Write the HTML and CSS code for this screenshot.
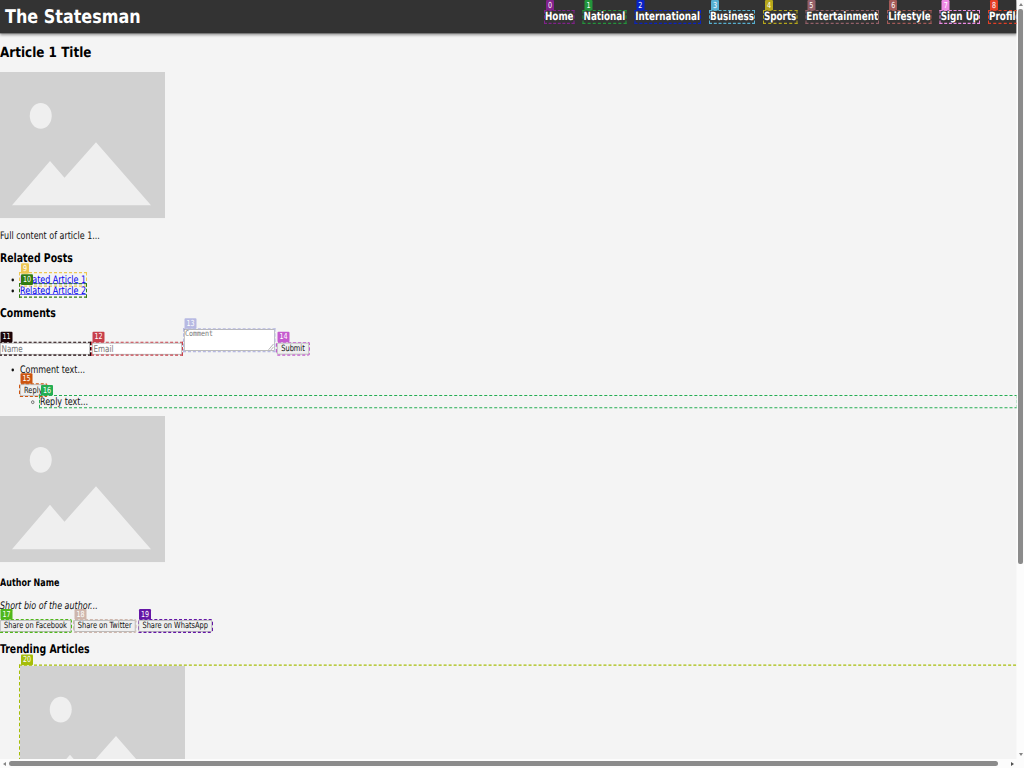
FILE: index.html
```html
<!DOCTYPE html>
<html lang="en">
<head>
<meta charset="utf-8">
<title>The Statesman</title>
<link rel="stylesheet" href="styles.css">
</head>
<body>
<svg class="defs" width="0" height="0"><symbol id="photo" viewBox="0 0 330 250" preserveAspectRatio="none"><rect width="330" height="250" fill="#d1d1d1"/><ellipse cx="81.5" cy="75" rx="22" ry="22" fill="#efefef"/><path d="M24 228L100 152L129 181L192 120L302 228Z" fill="#efefef"/></symbol></svg>
<div class="window">
<div class="page">
<header class="top">
<h1>The Statesman</h1>
<nav>
<a class="mark c0">Home<b>0</b></a><a class="mark c1">National<b>1</b></a><a class="mark c2">International<b>2</b></a><a class="mark c3">Business<b>3</b></a><a class="mark c4">Sports<b>4</b></a><a class="mark c5">Entertainment<b>5</b></a><a class="mark c6">Lifestyle<b>6</b></a><a class="mark c7">Sign Up<b>7</b></a><a class="mark c8">Profile<b>8</b></a>
</nav>
</header>
<main>
<h2>Article 1 Title</h2>
<svg class="photo"><use href="#photo"/></svg>
<p class="content">Full content of article 1...</p>
<h3 class="related">Related Posts</h3>
<ul class="links">
<li><a class="mark c9">Related Article 1<b>9</b></a></li>
<li><a class="mark c10">Related Article 2<b>10</b></a></li>
</ul>
<h3 class="comments">Comments</h3>
<div class="form">
<div class="mark field c11">Name<b>11</b></div>
<div class="mark field c12">Email<b>12</b></div>
<div class="mark area c13">Comment<svg width="12" height="12" viewBox="0 0 12 12"><path d="M1 11L11 1M6 11L11 6" stroke="#777" fill="none"/></svg><b>13</b></div>
<div class="mark button submit c14">Submit<b>14</b></div>
</div>
<ul class="thread">
<li>Comment text...
<div class="reply-row"><div class="mark button reply c15">Reply<b>15</b></div></div>
<ul><li class="mark c16">Reply text...<b>16</b></li></ul>
</li>
</ul>
<svg class="photo author-photo"><use href="#photo"/></svg>
<h4>Author Name</h4>
<p class="bio">Short bio of the author...</p>
<div class="share">
<div class="mark button fb c17">Share on Facebook<b>17</b></div>
<div class="mark button tw c18">Share on Twitter<b>18</b></div>
<div class="mark button wa c19">Share on WhatsApp<b>19</b></div>
</div>
<h3 class="trending">Trending Articles</h3>
<div class="mark trend c20"><svg class="photo"><use href="#photo"/></svg><b>20</b></div>
</main>
</div>
<div class="vbar"><i class="up"></i><span></span><i class="down"></i></div>
<div class="hbar"><i class="left"></i><span></span><i class="right"></i></div>
</div>
</body>
</html>
```

FILE: styles.css
```css
* { box-sizing: border-box; }
html, body { margin: 0; height: 768px; overflow: hidden; }
.defs { position: absolute; }
.window {
  display: grid;
  grid-template: 759px 9px / 1017px 7px;
  width: 1024px;
  height: 768px;
  overflow: hidden;
  background: #fcfcfc;
}
.page {
  width: 2033px;
  height: 1298px;
  overflow: hidden;
  transform: scale(.5, .585);
  transform-origin: 0 0;
  background: #f4f4f4;
  color: #111;
  font: 17.78px/19px "DejaVu Sans Condensed", "DejaVu Sans", sans-serif;
  text-rendering: geometricPrecision;
}
h1, h2, h3, h4, p, ul { margin: 0; }
h1, h2, h3, h4 { color: #000; }
.top {
  display: flex;
  align-items: center;
  height: 57px;
  padding-left: 10px;
  background: #333;
  box-shadow: 0 2px 5px rgba(0,0,0,.4);
}
h1 { width: 1080px; flex: none; color: #fff; font-family: "DejaVu Sans", sans-serif; font-size: 32px; line-height: 37px; }
nav { display: flex; gap: 20px; flex: none; font-weight: bold; font-size: 19.56px; line-height: 20px; color: #fff; }
.mark { position: relative; outline: 2.4px dashed var(--c); outline-offset: 0; }
.mark > b {
  position: absolute;
  left: 2px;
  top: -19px;
  padding: 0 4px;
  border-radius: 2px;
  background: var(--c);
  color: #fff;
  font: 14.2px/18px "DejaVu Sans Condensed", "DejaVu Sans", sans-serif;
}
.c0 { --c: #81218b; } .c1 { --c: #23953b; } .c2 { --c: #0822c5; }
.c3 { --c: #57b0d1; } .c4 { --c: #b5a61b; } .c5 { --c: #946069; }
.c6 { --c: #a45a58; } .c7 { --c: #ee8be5; } .c8 { --c: #e43e25; }
.c9 { --c: #edc752; } .c10 { --c: #317c10; } .c11 { --c: #1c0407; }
.c12 { --c: #c8404b; } .c13 { --c: #b7b9e2; } .c14 { --c: #c55bcf; }
.c15 { --c: #cc5510; } .c16 { --c: #24ae52; } .c17 { --c: #50b71b; }
.c18 { --c: #ceb6ac; } .c19 { --c: #6516a6; } .c20 { --c: #a5bd08; }
.links .mark > b { top: -17px; }
h2 { height: 66px; padding-top: 18px; font-family: "DejaVu Sans", sans-serif; font-size: 24px; line-height: 28px; }
.photo { display: block; width: 330px; height: 250px; }
.content { padding-top: 20px; height: 57px; }
h3 { font-size: 20.8px; line-height: 22px; }
.related { height: 38px; }
.links, .thread { padding-left: 40px; }
.links { height: 56px; }
.links a { color: #0000ee; text-decoration: underline; }
.links a b { display: inline-block; }
.comments { height: 40px; }
.form { display: flex; align-items: flex-start; gap: 4px; height: 58px; }
.field, .area { background: #fff; border: 1.5px solid #8b8b8b; color: #757575; }
.field { width: 180px; height: 20px; margin-top: 22px; padding-left: 2px; font-size: 16px; line-height: 17px; }
.area { width: 181px; height: 37px; margin-top: -1px; padding: 0 1px; font: 13.3px/15px "DejaVu Sans Mono", monospace; }
.field > b, .area > b, .button > b { left: 0; top: -20px; }
.area svg { position: absolute; right: 0; bottom: 0; }
.field, .area, .button { outline-offset: -.5px; }
.button { width: max-content; height: 20px; border: 1.5px solid #8b8b8b; border-radius: 2px; background: #efefef; padding: 0 5px; font-size: 14.8px; line-height: 17px; text-align: center; white-space: nowrap; }
.submit { width: 64px; margin-top: 22px; margin-left: 1px; }
.thread { height: 89px; }
.reply-row { padding-top: 16px; height: 36px; }
.reply { width: 53px; }
.thread ul { padding-left: 40px; }
h4 { height: 39px; margin-top: 25px; font-size: 17.78px; }
.bio { height: 35px; padding-top: 1px; font-style: italic; }
.share { display: flex; gap: 6px; height: 38px; }
.fb { width: 142px; } .tw { width: 123px; } .wa { width: 147px; }
.trending { height: 40px; }
.trend { margin-left: 40px; width: 2200px; height: 500px; }
.vbar, .hbar { display: flex; align-items: center; justify-content: space-between; background: #fcfcfc; position: relative; }
.vbar { flex-direction: column; grid-column: 2; grid-row: 1; padding: 3px 0; }
.vbar span { width: 5px; height: 555px; margin: 3px 0 auto; border-radius: 2px; background: #8b8b8b; }
.hbar { grid-column: 1; grid-row: 2; padding: 0 3px; }
.hbar span { width: 989px; height: 5px; margin: 0 auto 0 3px; border-radius: 3px; background: #8b8b8b; }
i { display: block; border: 2px solid transparent; width: 0; height: 0; flex: none; }
.up { border-top: 0; border-bottom: 3px solid #858585; }
.down { border-bottom: 0; border-top: 3px solid #858585; }
.left { border-left: 0; border-right: 3px solid #858585; }
.right { border-right: 0; border-left: 3px solid #505050; }
```
